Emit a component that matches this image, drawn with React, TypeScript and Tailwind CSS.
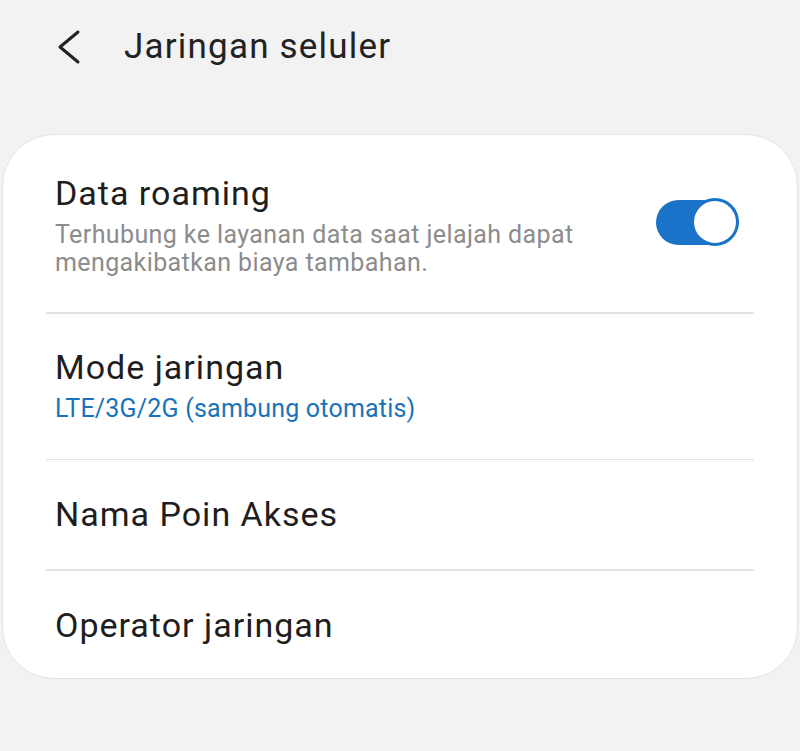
import React from "react";

const font = { fontFamily: "Roboto, 'Noto Sans', sans-serif" };

function Toggle() {
  return (
    <div className="relative w-[83px] h-[48px] flex items-center">
      <div className="w-[82px] h-[45px] rounded-full bg-[#1a73c8]" />
      <div className="absolute right-0 top-0 w-[48px] h-[48px] rounded-full bg-white border-[3px] border-[#1a73c8]" />
    </div>
  );
}

function Divider() {
  return <div className="mx-[43px] h-[1.5px] bg-[#e3e3e3]" />;
}

function Title({ children }: { children: React.ReactNode }) {
  return <div className="text-[34px] leading-[40px] tracking-[1px] text-[#1e1e1e]">{children}</div>;
}

export default function App() {
  return (
    <div className="w-[800px] h-[751px] bg-[#f2f2f2] text-[#1c1c1c]" style={font}>
      <header className="h-[134px] flex items-start">
        <div className="w-[124px] pl-[56px] pt-[29px]">
          <svg width="26" height="36" viewBox="0 0 26 36" fill="none">
            <path d="M22 3 L4 18 L22 33" stroke="#222" strokeWidth="3" strokeLinecap="round" strokeLinejoin="round" />
          </svg>
        </div>
        <h1 className="pt-[27px] text-[35px] leading-[40px] tracking-[1.2px] text-[#222]">Jaringan seluler</h1>
      </header>

      <div className="mx-[2px] rounded-[52px] bg-white border border-[#e4e4e4] h-[545px] flex flex-col">
        <div className="h-[177px] flex items-start pl-[52px] pr-[58px] pt-[38px]">
          <div className="flex-1">
            <Title>Data roaming</Title>
            <div className="text-[25px] leading-[28px] tracking-[0.4px] text-[#8c8c8c] mt-[8px]">
              Terhubung ke layanan data saat jelajah dapat
              <br />
              mengakibatkan biaya tambahan.
            </div>
          </div>
          <div className="mt-[25px]">
            <Toggle />
          </div>
        </div>
        <Divider />
        <div className="h-[145px] pl-[52px] pt-[33px]">
          <Title>Mode jaringan</Title>
          <div className="text-[25px] leading-[28px] tracking-[0.2px] text-[#1a72b8] mt-[8px]">LTE/3G/2G (sambung otomatis)</div>
        </div>
        <Divider />
        <div className="h-[109px] pl-[52px] pt-[34px]">
          <Title>Nama Poin Akses</Title>
        </div>
        <Divider />
        <div className="flex-1 pl-[52px] pt-[34px]">
          <Title>Operator jaringan</Title>
        </div>
      </div>
    </div>
  );
}
